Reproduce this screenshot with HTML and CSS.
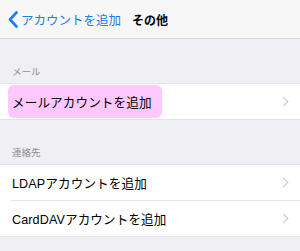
FILE: index.html
```html
<!DOCTYPE html>
<html lang="ja">
<head>
    <meta charset="UTF-8">
    <meta name="viewport" content="width=device-width, initial-scale=1.0">
    <title>その他</title>
    <link rel="stylesheet" href="styles.css">
</head>
<body>

<!-- Navigation Bar -->
<div class="nav-bar">
    <div class="back">
        <svg class="back-icon" width="10" height="17" viewBox="0 0 10 17">
            <path d="M8.5 1.5 L2 8.5 L8.5 15.5" fill="none" stroke="#1a7cf2" stroke-width="2.6" stroke-linecap="round" stroke-linejoin="round"/>
        </svg>
        <span>アカウントを追加</span>
    </div>
    <div class="nav-title">その他</div>
</div>

<!-- Mail -->
<div class="section-header">メール</div>
<div class="group">
    <div class="row">
        <span class="row-label highlight">メールアカウントを追加</span>
        <span class="chevron"></span>
    </div>
</div>

<!-- Contacts -->
<div class="section-header">連絡先</div>
<div class="group">
    <div class="row">
        <span class="row-label">LDAPアカウントを追加</span>
        <span class="chevron"></span>
    </div>
    <div class="row">
        <span class="row-label">CardDAVアカウントを追加</span>
        <span class="chevron"></span>
    </div>
</div>

</body>
</html>
```

FILE: styles.css
```css
body {
    margin: 0;
    background-color: #efeff4;
    font-family: "Liberation Sans", "Noto Sans CJK JP", sans-serif;
    color: #000;
}
.nav-bar {
    height: 39px;
    background-color: #f7f7f8;
    border-bottom: 1px solid #d8d8dc;
    display: flex;
    align-items: center;
    padding-left: 8px;
    box-sizing: border-box;
}
.back {
    display: flex;
    align-items: center;
    color: #1a7cf2;
    font-size: 12.5px;
    font-family: "Noto Sans CJK JP", sans-serif;
}
.back-icon {
    margin-right: 3px;
}
.nav-title {
    margin-left: 11px;
    font-size: 12px;
    font-weight: bold;
    font-family: "Noto Sans CJK JP", sans-serif;
}
.section-header {
    font-size: 9.5px;
    color: #8e8e93;
    font-family: "Noto Sans CJK JP", sans-serif;
    padding: 26px 12px 5px;
    line-height: 13px;
}
.group {
    background-color: #fff;
    border-top: 1px solid #e4e4e8;
    border-bottom: 1px solid #e4e4e8;
}
.row {
    height: 35px;
    display: flex;
    align-items: center;
    justify-content: space-between;
    margin-left: 11px;
    padding-right: 13px;
    font-size: 12.6px;
}
.row + .row {
    border-top: 1px solid #e6e6ea;
}
.row-label {
    padding-left: 1px;
    letter-spacing: 0.1px;
}
.highlight {
    background-color: #fdc8fd;
    border-radius: 6px;
    margin-left: -3px;
    padding: 7px 10px 7px 4px;
}
.chevron {
    width: 6px;
    height: 6px;
    border-right: 1.3px solid #c7c7cc;
    border-top: 1.3px solid #c7c7cc;
    transform: rotate(45deg);
}
```
